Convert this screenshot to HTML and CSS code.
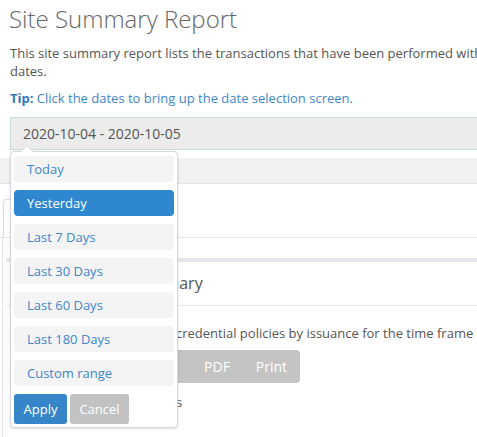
FILE: index.html
```html
<!DOCTYPE html>
<html>
<head>
<meta charset="utf-8">
<link rel="stylesheet" href="styles.css">
</head>
<body>
<div class="page">
  <h1 class="title">Site Summary Report</h1>
  <p class="intro">This site summary report lists the transactions that have been performed within the selected range of<br>dates.</p>
  <p class="tip"><b>Tip:</b> Click the dates to bring up the date selection screen.</p>
  <div class="range-wrap">
    <div class="range-input">2020-10-04 - 2020-10-05</div>
    <div class="picker">
      <ul class="ranges">
        <li>Today</li>
        <li class="active">Yesterday</li>
        <li>Last 7 Days</li>
        <li>Last 30 Days</li>
        <li>Last 60 Days</li>
        <li>Last 180 Days</li>
        <li>Custom range</li>
      </ul>
      <div class="picker-buttons">
        <button class="btn-apply">Apply</button>
        <button class="btn-cancel">Cancel</button>
      </div>
    </div>
  </div>
  <div class="strip"></div>
  <div class="tabs"><div class="tab">Overview</div></div>
  <div class="tab-content">
    <div class="box">
      <div class="box-header">Credential Summary</div>
      <div class="box-body">
        <p class="box-text">This table lists the credential policies by issuance for the time frame selected above.</p>
        <div class="btn-group">
          <span class="gbtn">Copy</span><span class="gbtn">Excel</span><span class="gbtn">PDF</span><span class="gbtn">Print</span>
        </div>
        <p class="box-foot">No records</p>
      </div>
    </div>
  </div>
</div>
</body>
</html>
```
FILE: styles.css
```css
html, body {
  margin: 0;
  padding: 0;
  overflow: hidden;
  background: #fff;
}
body {
  font-family: "Open Sans", "Liberation Sans", sans-serif;
  color: #555;
}
.page {
  width: 760px;
}
.title {
  margin: 0;
  padding: 2px 0 0 9px;
  font-size: 24px;
  font-weight: 300;
  line-height: 34px;
  color: #666;
}
.intro {
  margin: 8px 0 0 10px;
  font-size: 13px;
  line-height: 18px;
  color: #555;
}
.tip {
  margin: 9px 0 0 10px;
  font-size: 13px;
  line-height: 18px;
  color: #3d87c9;
}
.tip b {
  color: #2d79bb;
}
.range-wrap {
  position: relative;
  margin: 10px 0 0 10px;
}
.range-input {
  height: 31px;
  border: 1px solid #c7dcd4;
  background: #ececec;
  box-sizing: content-box;
  padding-left: 12px;
  font-size: 14px;
  line-height: 31px;
  color: #555;
}
.picker {
  position: absolute;
  left: 0;
  top: 34px;
  width: 160px;
  padding: 4px 3px 3px 3px;
  background: #fff;
  border: 1px solid #d6d6dc;
  border-radius: 4px;
  box-shadow: 0 1px 3px rgba(0,0,0,0.12);
  z-index: 5;
}
.picker::before {
  content: "";
  position: absolute;
  top: -7px;
  left: 9px;
  border-left: 7px solid transparent;
  border-right: 7px solid transparent;
  border-bottom: 7px solid #c9dad4;
}
.picker::after {
  content: "";
  position: absolute;
  top: -6px;
  left: 10px;
  border-left: 6px solid transparent;
  border-right: 6px solid transparent;
  border-bottom: 6px solid #fff;
}
.ranges {
  list-style: none;
  margin: 0;
  padding: 0;
}
.ranges li {
  height: 26px;
  line-height: 26px;
  margin-bottom: 8px;
  padding-left: 13px;
  background: #f4f4f4;
  border-radius: 4px;
  font-size: 13px;
  color: #3f86c9;
}
.ranges li.active {
  background: #2f87d0;
  color: #fff;
}
.picker-buttons {
  display: flex;
  gap: 3px;
}
.picker-buttons button {
  height: 30px;
  border: 0;
  border-radius: 3px;
  font-family: "Open Sans", "Liberation Sans", sans-serif;
  font-size: 13px;
  color: #fff;
  padding: 0;
}
.btn-apply {
  width: 53px;
  background: #3585c8;
}
.btn-cancel {
  width: 59px;
  background: #c2c2c2;
}
.strip {
  margin-top: 8px;
  height: 25px;
  background: #f2f2f2;
  border-bottom: 1px solid #e2e2e2;
}
.tabs {
  margin-top: 15px;
  padding-left: 3px;
  border-bottom: 1px solid #e6e6e6;
}
.tab {
  width: 150px;
  height: 38px;
  border: 1px solid #dcdcdc;
  border-bottom: 0;
  border-radius: 4px 4px 0 0;
  font-size: 13px;
  line-height: 38px;
  padding-left: 12px;
  box-sizing: border-box;
}
.tab-content {
  margin-left: 2px;
  border-left: 1px solid #e3e3e3;
  padding: 20px 0 40px 3px;
}
.box {
  border-top: 4px solid #e4e6e9;
}
.box-header {
  height: 43px;
  border-bottom: 1px solid #e8e8e8;
  font-size: 16px;
  line-height: 43px;
  color: #555;
  padding-left: 44px;
}
.box-body {
  padding-left: 10px;
}
.box-text {
  margin: 0;
  padding-top: 18px;
  padding-left: 48px;
  font-size: 13px;
  line-height: 18px;
  color: #555;
}
.btn-group {
  display: flex;
  margin-top: 8px;
  height: 33px;
  margin-left: 57px;
}
.gbtn {
  background: #c4c4c4;
  color: #fff;
  font-size: 14px;
  line-height: 33px;
  padding: 0 13px;
}
.gbtn:last-child {
  border-radius: 0 4px 4px 0;
}
.box-foot {
  margin: 10px 0 0 0;
  padding-left: 99px;
  font-size: 13px;
  line-height: 18px;
}
```
